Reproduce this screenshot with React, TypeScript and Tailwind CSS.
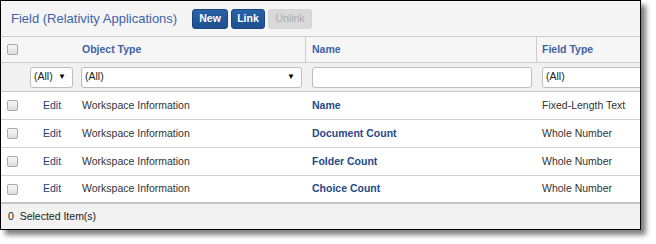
import React from "react";

type Row = { type: string; name: string; fieldType: string };

const rows: Row[] = [
  { type: "Workspace Information", name: "Name", fieldType: "Fixed-Length Text" },
  { type: "Workspace Information", name: "Document Count", fieldType: "Whole Number" },
  { type: "Workspace Information", name: "Folder Count", fieldType: "Whole Number" },
  { type: "Workspace Information", name: "Choice Count", fieldType: "Whole Number" },
];

function Check() {
  return (
    <div className="h-[11px] w-[11px] rounded-[2px] border border-[#a9a9a9] bg-gradient-to-b from-[#f7f7f7] to-[#dedede]" />
  );
}

function Select({ w, label, arrow = true }: { w: string; label: string; arrow?: boolean }) {
  return (
    <div
      className={`${w} flex h-[21px] shrink-0 items-center justify-between rounded-[3px] border border-[#bdbdbd] bg-white pl-[3px] pr-[6px] text-[10.5px] text-[#222]`}
    >
      <span>{label}</span>
      {arrow && <span className="text-[8px] leading-none text-black">▼</span>}
    </div>
  );
}

export default function App() {
  return (
    <div className="h-[244px] w-[656px] bg-white font-['Liberation_Sans',Arial,sans-serif]">
      <div className="flex h-[230px] w-[641px] flex-col overflow-hidden border border-black bg-white shadow-[5px_5px_5px_rgba(0,0,0,0.5)]">
        {/* title bar */}
        <div className="flex h-[36px] shrink-0 items-center border-b border-[#cccccc] bg-[#f5f5f5] pl-[10px]">
          <div className="w-[181px] text-[13px] text-[#3d62a8]">Field (Relativity Applications)</div>
          <div className="flex items-center gap-[3px] pt-[1px]">
            <button className="h-[20px] w-[36px] rounded-[3px] border border-[#1b4780] bg-gradient-to-b from-[#2a62a6] to-[#1d4f8f] text-[10.5px] font-bold text-white">
              New
            </button>
            <button className="h-[20px] w-[34px] rounded-[3px] border border-[#1b4780] bg-gradient-to-b from-[#2a62a6] to-[#1d4f8f] text-[10.5px] font-bold text-white">
              Link
            </button>
            <button className="h-[20px] w-[44px] rounded-[3px] border border-[#d4d4d4] bg-[#d9d9d9] text-[10.5px] text-[#a9a9a9]">
              Unlink
            </button>
          </div>
        </div>

        {/* header row */}
        <div className="flex h-[26px] shrink-0 items-stretch border-b border-[#cccccc] bg-[#f6f6f6] text-[10.5px] font-bold text-[#3d62a8]">
          <div className="flex w-[28px] shrink-0 items-center pl-[6px]">
            <Check />
          </div>
          <div className="w-[46px] shrink-0" />
          <div className="flex w-[230px] shrink-0 items-center pl-[7px]">Object Type</div>
          <div className="flex w-[231px] shrink-0 items-center border-l border-[#cccccc] pl-[6px]">Name</div>
          <div className="flex flex-1 items-center border-l border-[#cccccc] pl-[5px]">Field Type</div>
        </div>

        {/* filter row */}
        <div className="flex h-[29px] shrink-0 items-center overflow-hidden border-b border-[#cccccc] bg-[#f1f1f1]">
          <div className="w-[29px] shrink-0" />
          <Select w="w-[43px]" label="(All)" />
          <div className="w-[8px] shrink-0" />
          <Select w="w-[221px]" label="(All)" />
          <div className="w-[10px] shrink-0" />
          <div className="h-[21px] w-[220px] shrink-0 rounded-[3px] border border-[#bdbdbd] bg-white" />
          <div className="w-[10px] shrink-0" />
          <Select w="w-[120px]" label="(All)" arrow={false} />
        </div>

        {/* data rows */}
        {rows.map((r, i) => (
          <div
            key={r.name}
            className={`flex h-[28px] shrink-0 items-center bg-white text-[10.5px] ${
              i === rows.length - 1 ? "border-b-2 border-[#c4c4c4]" : "border-b border-[#d2d2d2]"
            }`}
          >
            <div className="flex w-[28px] shrink-0 items-center pl-[6px]">
              <Check />
            </div>
            <div className="w-[46px] shrink-0 text-center text-[#1f3f78]">Edit</div>
            <div className="w-[230px] shrink-0 pl-[7px] text-[#333]">{r.type}</div>
            <div className="w-[231px] shrink-0 pl-[7px] font-bold text-[#244a87]">{r.name}</div>
            <div className="flex-1 pl-[6px] text-[#333]">{r.fieldType}</div>
          </div>
        ))}

        {/* footer */}
        <div className="flex flex-1 items-center bg-[#f2f2f2] pl-[7px] text-[10.5px] text-[#222]">
          0&nbsp;&nbsp;Selected Item(s)
        </div>
      </div>
    </div>
  );
}
